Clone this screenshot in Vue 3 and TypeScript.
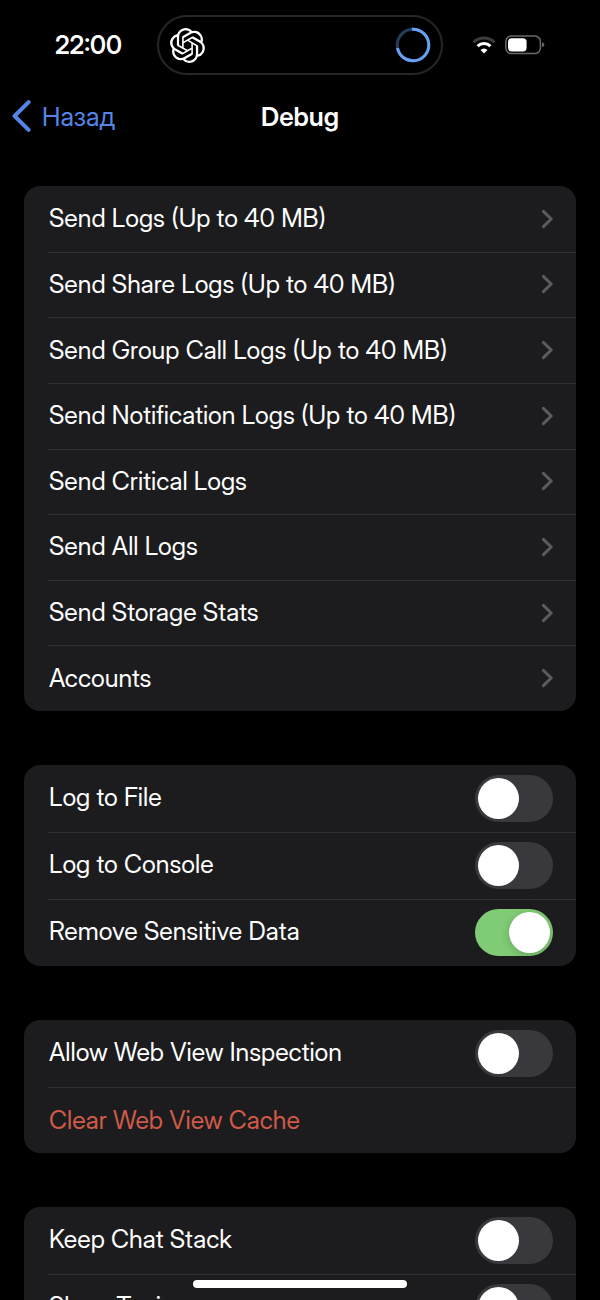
<script setup lang="ts">
import { ref } from 'vue'

interface Toggle {
  id: string
  label: string
  on: boolean
}

const logActions: string[] = [
  'Send Logs (Up to 40 MB)',
  'Send Share Logs (Up to 40 MB)',
  'Send Group Call Logs (Up to 40 MB)',
  'Send Notification Logs (Up to 40 MB)',
  'Send Critical Logs',
  'Send All Logs',
  'Send Storage Stats',
  'Accounts',
]

const logToggles = ref<Toggle[]>([
  { id: 'log-file', label: 'Log to File', on: false },
  { id: 'log-console', label: 'Log to Console', on: false },
  { id: 'remove-sensitive', label: 'Remove Sensitive Data', on: true },
])

const webInspection = ref(false)

const chatToggles = ref<Toggle[]>([
  { id: 'keep-stack', label: 'Keep Chat Stack', on: false },
  { id: 'show-typing', label: 'Show Typing', on: false },
])
</script>

<template>
  <div class="screen">
    <div class="status">
      <div class="side left"><time class="clock">22:00</time></div>
      <div class="island">
        <svg class="knot" viewBox="0 0 24 24" aria-hidden="true">
          <path
            d="M22.2819 9.8211a5.9847 5.9847 0 0 0-.5157-4.9108 6.0462 6.0462 0 0 0-6.5098-2.9A6.0651 6.0651 0 0 0 4.9807 4.1818a5.9847 5.9847 0 0 0-3.9977 2.9 6.0462 6.0462 0 0 0 .7427 7.0966 5.98 5.98 0 0 0 .511 4.9107 6.051 6.051 0 0 0 6.5146 2.9001A5.9847 5.9847 0 0 0 13.2599 24a6.0557 6.0557 0 0 0 5.7718-4.2058 5.9894 5.9894 0 0 0 3.9977-2.9001 6.0557 6.0557 0 0 0-.7475-7.0729zm-9.022 12.6081a4.4755 4.4755 0 0 1-2.8764-1.0408l.1419-.0804 4.7783-2.7582a.7948.7948 0 0 0 .3927-.6813v-6.7369l2.02 1.1686a.071.071 0 0 1 .038.052v5.5826a4.504 4.504 0 0 1-4.4945 4.4944zm-9.6607-4.1254a4.4708 4.4708 0 0 1-.5346-3.0137l.142.0852 4.783 2.7582a.7712.7712 0 0 0 .7806 0l5.8428-3.3685v2.3324a.0804.0804 0 0 1-.0332.0615L9.74 19.9502a4.4992 4.4992 0 0 1-6.1408-1.6464zM2.3408 7.8956a4.485 4.485 0 0 1 2.3655-1.9728V11.6a.7664.7664 0 0 0 .3879.6765l5.8144 3.3543-2.0201 1.1685a.0757.0757 0 0 1-.071 0l-4.8303-2.7865A4.504 4.504 0 0 1 2.3408 7.872zm16.5963 3.8558L13.1038 8.364 15.1192 7.2a.0757.0757 0 0 1 .071 0l4.8303 2.7913a4.4944 4.4944 0 0 1-.6765 8.1042v-5.6772a.79.79 0 0 0-.407-.667zm2.0107-3.0231l-.142-.0852-4.7735-2.7818a.7759.7759 0 0 0-.7854 0L9.409 9.2297V6.8974a.0662.0662 0 0 1 .0284-.0615l4.8303-2.7866a4.4992 4.4992 0 0 1 6.6802 4.66zM8.3065 12.863l-2.02-1.1638a.0804.0804 0 0 1-.038-.0567V6.0742a4.4992 4.4992 0 0 1 7.3757-3.4537l-.142.0805L8.704 5.459a.7948.7948 0 0 0-.3927.6813zm1.0976-2.3654l2.602-1.4998 2.6069 1.4998v2.9994l-2.5974 1.4997-2.6067-1.4997Z"
          />
        </svg>
        <svg class="ring" viewBox="0 0 36 36" aria-hidden="true">
          <circle cx="18" cy="18" r="15.8" class="ring-track" />
          <circle
            cx="18"
            cy="18"
            r="15.8"
            class="ring-value"
            pathLength="100"
            stroke-dasharray="73 27"
            transform="rotate(-94 18 18)"
          />
        </svg>
      </div>
      <div class="side right">
        <svg class="wifi" viewBox="0 0 24 18" aria-hidden="true">
          <path d="M1.8 6.2A14.6 14.6 0 0 1 22.2 6.2" stroke="#3c3c3e" />
          <path d="M5.6 10.2A9.2 9.2 0 0 1 18.4 10.2" stroke="#fff" />
          <path d="M12 17.5 8.5 14Q12 11 15.5 14Z" class="solid" />
        </svg>
        <svg class="battery" viewBox="0 0 40 20" aria-hidden="true">
          <rect x="0.8" y="1" width="34.6" height="17.6" rx="5.6" class="shell" />
          <rect x="3" y="3.2" width="18.6" height="13.2" rx="3.6" fill="#fff" />
          <path d="M37 7.5Q39.4 8 39.4 9.8T37 12.1Z" fill="#6a6a6c" />
        </svg>
      </div>
    </div>

    <header class="nav">
      <button class="back" type="button">
        <svg viewBox="0 0 20 34" aria-hidden="true"><path d="M16.6 3.2 2.6 17 16.6 30.8" /></svg>
        <span>Назад</span>
      </button>
      <h1>Debug</h1>
    </header>

    <main class="content">
      <section class="card links">
        <button v-for="label in logActions" :key="label" class="row" type="button">
          <span class="label">{{ label }}</span>
          <svg class="chevron" viewBox="0 0 12 20" aria-hidden="true"><path d="M2.4 2.4 10.2 10 2.4 17.6" /></svg>
        </button>
      </section>

      <section class="card">
        <label v-for="t in logToggles" :key="t.id" class="row" :for="t.id">
          <span class="label">{{ t.label }}</span>
          <input :id="t.id" v-model="t.on" class="switch" type="checkbox" role="switch" />
        </label>
      </section>

      <section class="card web">
        <label class="row" for="web-inspection">
          <span class="label">Allow Web View Inspection</span>
          <input id="web-inspection" v-model="webInspection" class="switch" type="checkbox" role="switch" />
        </label>
        <button class="row danger" type="button">
          <span class="label">Clear Web View Cache</span>
        </button>
      </section>

      <section class="card">
        <label v-for="t in chatToggles" :key="t.id" class="row" :for="t.id">
          <span class="label">{{ t.label }}</span>
          <input :id="t.id" v-model="t.on" class="switch" type="checkbox" role="switch" />
        </label>
      </section>
    </main>

    <div class="home-bar"></div>
  </div>
</template>

<style>
body {
  margin: 0;
  background: #000;
}
</style>

<style scoped>
.screen {
  height: 100vh;
  display: flex;
  flex-direction: column;
  overflow: hidden;
  background: #000;
  color: #fff;
  font-family: "Inter Display", Inter, "Liberation Sans", sans-serif;
  font-size: 25px;
}

button {
  border: 0;
  margin: 0;
  padding: 0;
  background: none;
  color: inherit;
  font: inherit;
  text-align: left;
  cursor: pointer;
}

.status {
  flex: none;
  display: grid;
  grid-template-columns: 1fr 286px 1fr;
  padding-top: 15px;
}

.side {
  display: flex;
  align-items: center;
}

.left {
  justify-content: flex-end;
  padding-right: 35px;
}

.right {
  gap: 9px;
  padding-left: 29px;
}

.clock {
  font-weight: 600;
}

.island {
  box-sizing: border-box;
  height: 60px;
  border: 2px solid #262626;
  border-radius: 30px;
  display: flex;
  align-items: center;
  justify-content: space-between;
  padding: 0 10px 0 11px;
}

.knot {
  width: 35px;
  height: 35px;
  fill: #fff;
}

.ring {
  width: 36px;
  height: 36px;
  fill: none;
  stroke-width: 3;
}

.ring-track {
  stroke: #243d5c;
}

.ring-value {
  stroke: #68a1f4;
}

.wifi {
  width: 24px;
  height: 18px;
  fill: none;
  stroke-width: 3;
}

.wifi .solid {
  fill: #fff;
}

.battery {
  width: 40px;
  height: 20px;
}

.shell {
  fill: none;
  stroke: #6a6a6c;
  stroke-width: 1.5;
}

.nav {
  flex: none;
  display: grid;
  grid-template-columns: 1fr auto 1fr;
  align-items: center;
  height: 82px;
  margin-bottom: 29px;
}

.back {
  justify-self: start;
  display: flex;
  align-items: center;
  gap: 10px;
  padding-left: 12px;
  color: #5384e6;
  font-size: 26px;
}

.back svg {
  width: 20px;
  height: 34px;
  fill: none;
  stroke: currentColor;
  stroke-width: 4;
  stroke-linecap: round;
  stroke-linejoin: round;
}

h1 {
  margin: 0;
  font-size: 26px;
  font-weight: 600;
}

.content {
  flex: 1;
  min-height: 0;
  overflow-y: auto;
  scrollbar-width: none;
  display: flex;
  flex-direction: column;
  gap: 54px;
  padding: 0 24px;
}

.card {
  flex: none;
  display: grid;
  grid-auto-rows: minmax(67px, 1fr);
  border-radius: 16px;
  background: #1c1c1e;
}

.links {
  grid-auto-rows: minmax(65px, 1fr);
  min-height: 525px;
}

.web {
  grid-auto-rows: auto;
  grid-template-rows: 67px 66px;
}

.row {
  display: grid;
  grid-template-columns: 1fr auto;
  align-items: center;
  padding-left: 25px;
  padding-right: 23px;
  background: linear-gradient(#2e2e30, #2e2e30) 24px 0 / 100% 1px no-repeat;
  cursor: pointer;
}

.row:first-child {
  background: none;
}

.label {
  line-height: 30px;
}

.links .label {
  padding-bottom: 1px;
}

label .label {
  padding-bottom: 3px;
}

.danger {
  color: #cf5a48;
}

.chevron {
  width: 12px;
  height: 20px;
  fill: none;
  stroke: #5b5b5e;
  stroke-width: 3;
  stroke-linecap: round;
  stroke-linejoin: round;
}

.switch {
  appearance: none;
  box-sizing: border-box;
  width: 78px;
  height: 47px;
  margin: 0;
  padding: 3px;
  border-radius: 24px;
  background: #39393d;
  display: flex;
  align-items: center;
  cursor: pointer;
}

.switch::before {
  content: "";
  width: 41px;
  height: 41px;
  border-radius: 50%;
  background: #fff;
}

.switch:checked {
  justify-content: flex-end;
  background: #80cb75;
}

.switch:checked::before {
  box-shadow: 0 2px 8px rgba(0, 0, 0, 0.2);
}

.home-bar {
  position: fixed;
  left: 50%;
  bottom: 12px;
  width: 214px;
  height: 8px;
  border-radius: 4px;
  background: #fff;
  transform: translateX(-50%);
}
</style>
